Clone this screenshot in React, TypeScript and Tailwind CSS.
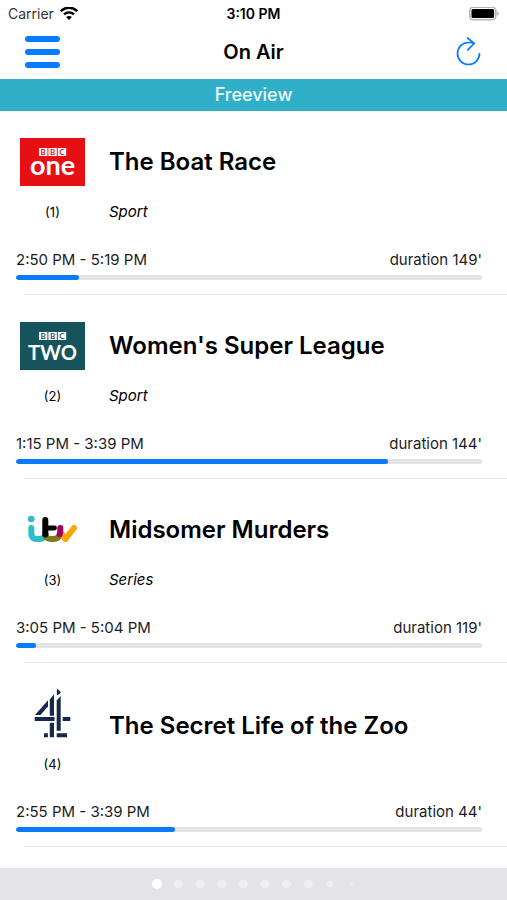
import type { ReactNode } from "react";

type Programme = {
  channel: number;
  logo: ReactNode;
  title: string;
  genre?: string;
  time: string;
  elapsed: number;
  duration: number;
};

function BbcBlocks() {
  return (
    <>
      {["B", "B", "C"].map((letter, index) => (
        <g key={index}>
          <rect x={19 + index * 9.4} y="10" width="8.4" height="8" fill="#fff" />
          <text
            x={23.2 + index * 9.4}
            y="16.8"
            textAnchor="middle"
            fontSize="8"
            fontWeight="700"
            className="font-['Lato',sans-serif]"
          >
            {letter}
          </text>
        </g>
      ))}
    </>
  );
}

function BbcOneLogo() {
  return (
    <svg viewBox="0 0 65 48" className="h-12 w-[65px]" role="img" aria-label="BBC One">
      <rect width="65" height="48" fill="#e60f14" />
      <g fill="#e60f14">
        <BbcBlocks />
      </g>
      <text
        x="32.5"
        y="36.5"
        textAnchor="middle"
        fontSize="27"
        fontWeight="700"
        fill="#fff"
        className="font-['Lato',sans-serif]"
      >
        one
      </text>
    </svg>
  );
}

function BbcTwoLogo() {
  return (
    <svg viewBox="0 0 65 48" className="h-12 w-[65px]" role="img" aria-label="BBC Two">
      <rect width="65" height="48" fill="#15535d" />
      <g fill="#15535d">
        <BbcBlocks />
      </g>
      <text
        x="32.5"
        y="37.5"
        textAnchor="middle"
        fontSize="20"
        fontWeight="700"
        fill="#fff"
        className="font-['Lato',sans-serif]"
      >
        TWO
      </text>
    </svg>
  );
}

function ItvLogo() {
  return (
    <svg viewBox="0 0 65 48" className="h-12 w-[65px]" role="img" aria-label="itv" fill="none">
      <circle cx="11.3" cy="13" r="3.3" fill="#2fbcc8" />
      <path
        d="M11.3 22v5.500c0 3.700 2 5.500 5 5.500h3c3.500 0 6-1.800 6-5.500"
        stroke="#2fbcc8"
        strokeWidth="6"
        strokeLinecap="round"
      />
      <path d="M25.300 27c0 4 2 6 5.200 6h2.500c4.500 0 6.600-2.200 7.200-5.500" stroke="#827a1c" strokeWidth="6" />
      <path d="M25.300 14v14.500" stroke="#000" strokeWidth="6" strokeLinecap="round" />
      <path d="M25.300 22h9.200" stroke="#000" strokeWidth="4.800" strokeLinecap="round" />
      <path d="M45.500 32.800L54 22" stroke="#fca60a" strokeWidth="6" strokeLinecap="round" />
      <path d="M42 28.500l3.500 4.300" stroke="#fca60a" strokeWidth="6" strokeLinecap="round" />
      <path d="M40.300 22v3c0 1.300-.2 2.300-.6 3.200" stroke="#a1005c" strokeWidth="6" strokeLinecap="round" />
    </svg>
  );
}

function Channel4Logo() {
  return (
    <svg viewBox="0 0 65 52" className="-mt-1 h-[52px] w-[65px]" role="img" aria-label="Channel 4" fill="#16284c">
      <path d="M36.900 2.500l3.600 3.200v1.300l-3.600 2.600z" />
      <path d="M36.700 14.500l4-4.500v34.700h-4z" />
      <path d="M29.800 13.500l4.200-5.300v21.500h-4.200z" />
      <path d="M28 14.200v6.100L20.500 29h-5.500z" />
      <path d="M14.700 31H34.500v4H14.700zM42.700 31h7.600v4h-7.600z" />
      <path d="M29.800 36.700H34v14.600h-4.200zM24 47.300h3.900v4H24zM36.700 47.300h10.400v4H36.700z" />
    </svg>
  );
}

const programmes: Programme[] = [
  {
    channel: 1,
    logo: <BbcOneLogo />,
    title: "The Boat Race",
    genre: "Sport",
    time: "2:50 PM - 5:19 PM",
    elapsed: 20,
    duration: 149,
  },
  {
    channel: 2,
    logo: <BbcTwoLogo />,
    title: "Women's Super League",
    genre: "Sport",
    time: "1:15 PM - 3:39 PM",
    elapsed: 115,
    duration: 144,
  },
  {
    channel: 3,
    logo: <ItvLogo />,
    title: "Midsomer Murders",
    genre: "Series",
    time: "3:05 PM - 5:04 PM",
    elapsed: 5,
    duration: 119,
  },
  {
    channel: 4,
    logo: <Channel4Logo />,
    title: "The Secret Life of the Zoo",
    time: "2:55 PM - 3:39 PM",
    elapsed: 15,
    duration: 44,
  },
];

function StatusBar() {
  return (
    <div className="grid h-7 grid-cols-3 items-center px-2 text-sm leading-5">
      <div className="flex items-center gap-[6px] text-[#333]">
        <span>Carrier</span>
        <svg viewBox="0 0 18 14" className="h-[14px] w-[18px]" fill="none" stroke="#000" aria-hidden="true">
          <path d="M.8 4.200c4.700-4.700 11.700-4.700 16.400 0" strokeWidth="2.500" />
          <path d="M4 7.400c2.900-2.800 7.100-2.800 10 0" strokeWidth="2.300" />
          <path d="M9 12.900L6.100 10c1.700-1.500 4.100-1.500 5.800 0z" fill="#000" stroke="none" />
        </svg>
      </div>
      <p className="text-center font-semibold">3:10 PM</p>
      <svg viewBox="0 0 30 14" className="h-[14px] w-[30px] justify-self-end" role="img" aria-label="Battery full">
        <rect x=".8" y=".3" width="26" height="12.400" rx="3.500" fill="#fff" stroke="#b5b5b5" strokeWidth="1.600" />
        <rect x="2.500" y="2" width="22.600" height="9" rx="1.500" />
        <path d="M28 4.200c2.300.7 2.300 3.900 0 4.600z" fill="#b5b5b5" />
      </svg>
    </div>
  );
}

function NavBar() {
  return (
    <header className="grid grid-cols-3 items-center px-[25px] pb-[3px]">
      <button type="button" aria-label="Menu" className="flex h-12 w-[35px] flex-col justify-center gap-[7px]">
        <span className="h-[6px] rounded-full bg-[#0a7aff]" />
        <span className="h-[6px] rounded-full bg-[#0a7aff]" />
        <span className="h-[6px] rounded-full bg-[#0a7aff]" />
      </button>
      <h1 className="text-center text-xl font-semibold">On Air</h1>
      <button type="button" aria-label="Refresh" className="justify-self-end">
        <svg viewBox="0 0 26 30" className="h-[30px] w-[26px]" fill="none" stroke="#0a7aff" strokeWidth="1.700">
          <path d="M23.500 16.500a11 11 0 1 1-11-11c2 0 4 .2 5.700.9" strokeLinecap="round" />
          <path d="M11.500 1l6.700 5.500-6.400 6.400" strokeLinecap="round" strokeLinejoin="round" />
        </svg>
      </button>
    </header>
  );
}

function ProgrammeRow({ channel, logo, title, genre, time, elapsed, duration }: Programme) {
  return (
    <li>
      <div className="pb-[14px] pl-4 pr-[25px] pt-[13px]">
        <div className="flex gap-5">
          <div className="flex w-[73px] shrink-0 flex-col items-center pt-[14px]">
            <div className="h-12">{logo}</div>
            <p className="mt-[14px] text-[13px] leading-6">({channel})</p>
          </div>
          <div className="flex flex-1 flex-col">
            <h2 className="flex flex-1 items-center text-2xl font-semibold">{title}</h2>
            {genre && <p className="text-[15px] italic leading-6">{genre}</p>}
          </div>
        </div>

        <div className="mt-[26px] flex justify-between text-[15px] leading-5 text-[#1c1c1e]">
          <p>{time}</p>
          <p>duration {duration}'</p>
        </div>
        <div
          role="progressbar"
          aria-label={title}
          aria-valuenow={elapsed}
          aria-valuemax={duration}
          className="mt-[5px] h-[5px] overflow-hidden rounded-full bg-[#e4e4e5]"
        >
          <div
            className="h-full rounded-full bg-[#0a7aff]"
            style={{ width: `${(elapsed / duration) * 100}%` }}
          />
        </div>
      </div>
      <div className="ml-[25px] h-px bg-[#e3e3e5]" />
    </li>
  );
}

export default function App() {
  return (
    <div className="flex min-h-screen flex-col bg-white font-['Inter',sans-serif] text-black">
      <StatusBar />
      <NavBar />
      <p className="h-8 bg-[#31afc8] text-center text-lg font-medium leading-8 text-[#ecfbff]">Freeview</p>

      <ul className="flex-1">
        {programmes.map((programme) => (
          <ProgrammeRow key={programme.channel} {...programme} />
        ))}
      </ul>

      <footer className="flex h-8 items-center justify-center bg-[#e4e3e8]">
        <svg viewBox="0 0 204 10" className="h-[10px] w-[204px]" role="img" aria-label="Page 1">
          {[5, 4.5, 4.5, 4.5, 4.5, 4.5, 4.5, 4.5, 3.5, 1.5].map((radius, index) => (
            <circle
              key={index}
              cx={5 + index * 21.6}
              cy="5"
              r={radius}
              fill={index === 0 ? "#fff" : "#efeff3"}
            />
          ))}
        </svg>
      </footer>
    </div>
  );
}
